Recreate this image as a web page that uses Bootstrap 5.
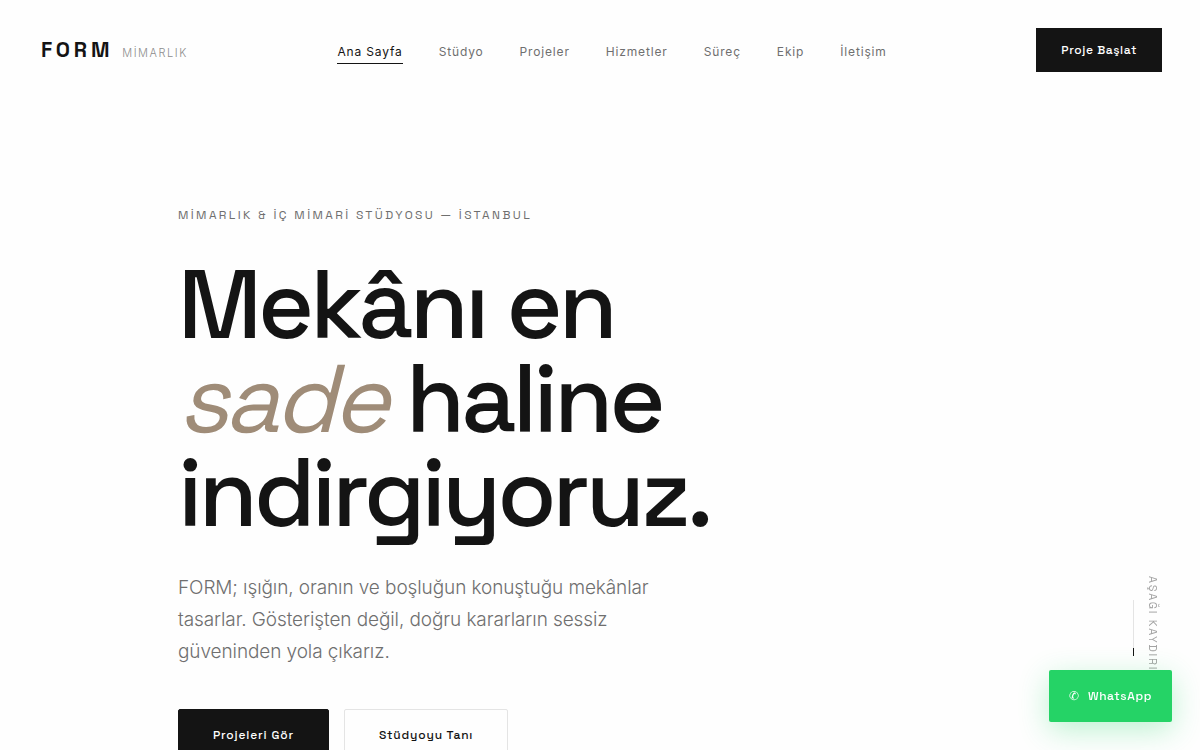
<!DOCTYPE html>
<html lang="tr">
<head>
<meta charset="utf-8">
<meta name="viewport" content="width=device-width, initial-scale=1">
<title>FORM Mimarlık</title>
<link href="https://cdn.jsdelivr.net/npm/bootstrap@5.3.0/dist/css/bootstrap.min.css" rel="stylesheet">
<style>
:root { --ink: #141414; --soft: #6f6f6f; --faint: #a3a3a3; --line: #e4e4e4; --sand: #9f8c78; --wa: #25d366; }
body { font-family: Inter, sans-serif; background: #fefefe; color: var(--ink); }
.display-face, .btn { font-family: "Space Grotesk", Inter, sans-serif; }
.site-nav { padding: 28px 38px 28px 41px; }
.brand-link { gap: 9px; }
.brand-name { font-size: 21px; line-height: 28px; font-weight: 700; letter-spacing: .18em; color: var(--ink); }
.brand-sub { font-size: 11px; font-weight: 300; letter-spacing: .14em; color: #8c8c8c; }
.menu { gap: 36px; }
.menu .nav-link { padding: 6px 0 2px; font-size: 12px; line-height: 18px; letter-spacing: .07em; color: var(--soft); border-bottom: 1px solid transparent; }
.menu .nav-link.active { color: var(--ink); border-color: var(--ink); }
.btn { --bs-btn-border-radius: 2px; --bs-btn-font-weight: 500; letter-spacing: .05em; }
.btn-ink { --bs-btn-bg: var(--ink); --bs-btn-color: #fefefe; --bs-btn-border-color: var(--ink); --bs-btn-hover-bg: #333; --bs-btn-hover-color: #fff; }
.btn-line { --bs-btn-bg: #fefefe; --bs-btn-color: var(--ink); --bs-btn-border-color: var(--line); --bs-btn-hover-border-color: var(--ink); }
.btn-nav { --bs-btn-border-radius: 0; font-size: 12px; line-height: 16px; padding: 13px 24px; }
.btn-hero { font-size: 12px; line-height: 18px; padding: 16px 34px; letter-spacing: .07em; }
.hero { padding: 106px 24px 96px 178px; }
.hero-actions { gap: 15px; }
.eyebrow { font-size: 12px; line-height: 18px; letter-spacing: .2em; color: var(--soft); margin-bottom: 34px; }
.headline { font-size: 96px; line-height: 94px; font-weight: 500; letter-spacing: -.04em; margin-bottom: 32px; max-width: 640px; }
.headline em { font-weight: 400; color: var(--sand); }
.intro { font-size: 19px; line-height: 32px; font-weight: 300; letter-spacing: -.005em; color: var(--soft); max-width: 500px; margin-bottom: 41px; }
.scroll-hint { right: 40px; bottom: 70px; gap: 12px; }
.scroll-word { writing-mode: vertical-rl; font-size: 11px; line-height: 14px; letter-spacing: .16em; color: var(--faint); }
.scroll-track { width: 1px; height: 56px; background: linear-gradient(var(--line) 48px, var(--ink) 48px); }
.wa { right: 28px; bottom: 28px; background: var(--wa); color: #fff; border-radius: 2px; font-size: 12px; line-height: 20px; padding: 16px 20px; font-weight: 500; box-shadow: 0 8px 30px rgba(37, 211, 102, .3); letter-spacing: .05em; gap: 8px; }
</style>
</head>
<body>
<header class="site-nav d-flex align-items-center justify-content-between">
  <a href="#" class="brand-link d-flex align-items-baseline text-decoration-none">
    <span class="brand-name display-face">FORM</span><span class="brand-sub">MİMARLIK</span>
  </a>
  <nav class="menu nav" aria-label="Ana menü">
    <a class="nav-link active" aria-current="page" href="#">Ana Sayfa</a>
    <a class="nav-link" href="#">Stüdyo</a>
    <a class="nav-link" href="#">Projeler</a>
    <a class="nav-link" href="#">Hizmetler</a>
    <a class="nav-link" href="#">Süreç</a>
    <a class="nav-link" href="#">Ekip</a>
    <a class="nav-link" href="#">İletişim</a>
  </nav>
  <button type="button" class="btn btn-ink btn-nav">Proje Başlat</button>
</header>
<main class="hero">
  <p class="eyebrow display-face">MİMARLIK &amp; İÇ MİMARİ STÜDYOSU — İSTANBUL</p>
  <h1 class="headline display-face">Mekânı en<br><em>sade</em> haline<br>indirgiyoruz.</h1>
  <p class="intro">FORM; ışığın, oranın ve boşluğun konuştuğu mekânlar tasarlar. Gösterişten değil, doğru kararların sessiz güveninden yola çıkarız.</p>
  <div class="hero-actions d-flex flex-wrap">
    <button type="button" class="btn btn-ink btn-hero">Projeleri Gör</button>
    <button type="button" class="btn btn-line btn-hero">Stüdyoyu Tanı</button>
  </div>
</main>
<div class="scroll-hint position-fixed d-flex align-items-center">
  <span class="scroll-track"></span><span class="scroll-word display-face">AŞAĞI KAYDIRIN</span>
</div>
<a href="#" class="wa display-face position-fixed d-flex align-items-center text-decoration-none"><span>✆</span><span>WhatsApp</span></a>
<script src="https://cdn.jsdelivr.net/npm/bootstrap@5.3.0/dist/js/bootstrap.bundle.min.js"></script>
</body>
</html>
